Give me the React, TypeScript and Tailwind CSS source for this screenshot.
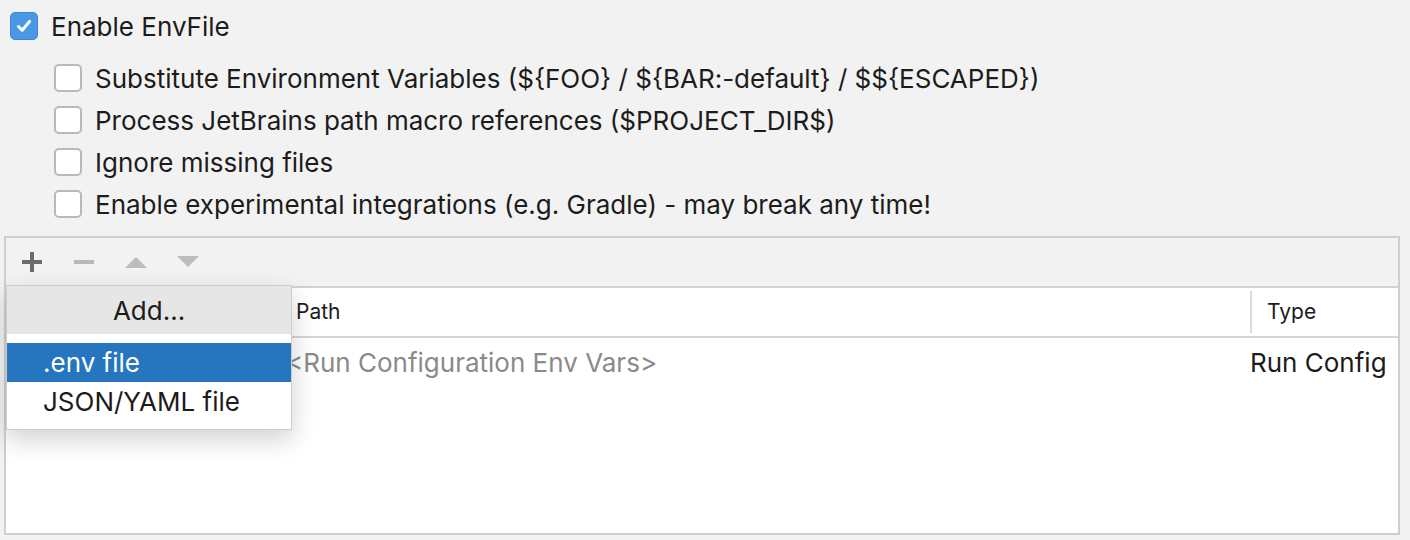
import React from 'react';

const FONT = { fontFamily: 'Inter, "Noto Sans", sans-serif' };

function Box({ checked }: { checked?: boolean }) {
  if (checked) {
    return (
      <div className="flex h-[28px] w-[28px] shrink-0 items-center justify-center rounded-[5px] bg-[#4a97e6] border border-[#3f87d4]">
        <svg width="18" height="18" viewBox="0 0 18 18">
          <path d="M3.5 9.5 L7.2 13.2 L14.5 4.5" fill="none" stroke="#fff" strokeWidth="3" strokeLinecap="round" strokeLinejoin="round" />
        </svg>
      </div>
    );
  }
  return <div className="h-[28px] w-[28px] shrink-0 rounded-[5px] border-2 border-[#b9b9b9] bg-white" />;
}

const options = [
  'Substitute Environment Variables (${FOO} / ${BAR:-default} / $${ESCAPED})',
  'Process JetBrains path macro references ($PROJECT_DIR$)',
  'Ignore missing files',
  'Enable experimental integrations (e.g. Gradle) - may break any time!',
];

export default function App() {
  return (
    <div className="h-[540px] w-[1410px] overflow-hidden bg-[#f2f2f2] text-[26px] text-[#1c1c1c]" style={FONT}>
      <div className="mt-[12px] flex h-[28px] items-center gap-[13px] pl-[10px]">
        <Box checked />
        <span>Enable EnvFile</span>
      </div>

      <div className="mt-[24px] flex flex-col gap-[14px] pl-[54px]">
        {options.map(o => (
          <div key={o} className="flex h-[28px] items-center gap-[13px]">
            <Box />
            <span>{o}</span>
          </div>
        ))}
      </div>

      <div className="relative ml-[4px] mt-[18px] flex h-[299px] w-[1396px] flex-col border-2 border-[#cfcfcf]">
        <div className="flex h-[50px] shrink-0 items-center border-b-2 border-[#d2d2d2] pl-[16px]">
          <svg width="20" height="20" viewBox="0 0 20 20">
            <rect x="8" y="0" width="4" height="20" fill="#6b6b6b" />
            <rect x="0" y="8" width="20" height="4" fill="#6b6b6b" />
          </svg>
          <svg className="ml-[32px]" width="20" height="20" viewBox="0 0 20 20">
            <rect x="0" y="8" width="20" height="4" fill="#b8b8b8" />
          </svg>
          <svg className="ml-[30px]" width="24" height="14" viewBox="0 0 24 14">
            <path d="M12 2 L23 13 L1 13 Z" fill="#bdbdbd" />
          </svg>
          <svg className="ml-[28px]" width="24" height="14" viewBox="0 0 24 14">
            <path d="M1 1 L23 1 L12 12 Z" fill="#bdbdbd" />
          </svg>
        </div>

        <div className="flex-1 bg-white">
          <div className="flex h-[50px] items-center border-b-2 border-[#d6d6d6] text-[21px]">
            <div className="w-[290px] shrink-0" />
            <div className="flex-1">Path</div>
            <div className="h-[42px] w-[2px] bg-[#dadada]" />
            <div className="w-[146px] pl-[15px]">Type</div>
          </div>
          <div className="flex h-[48px] items-center">
            <div className="w-[280px] shrink-0" />
            <div className="flex-1 text-[#8a8a8a]">&lt;Run Configuration Env Vars&gt;</div>
            <div className="w-[148px]">Run Config</div>
          </div>
        </div>

        <div className="absolute left-0 top-[47px] flex h-[145px] w-[286px] flex-col border border-[#cdcdcd] bg-white shadow-[0_10px_24px_rgba(0,0,0,0.18)]">
          <div className="flex h-[48px] shrink-0 items-center justify-center bg-[#e6e6e6]">Add...</div>
          <div className="h-[9px]" />
          <div className="flex h-[39px] items-center bg-[#2675bf] pl-[36px] text-white">.env file</div>
          <div className="flex h-[39px] items-center pl-[36px]">JSON/YAML file</div>
        </div>
      </div>
    </div>
  );
}
